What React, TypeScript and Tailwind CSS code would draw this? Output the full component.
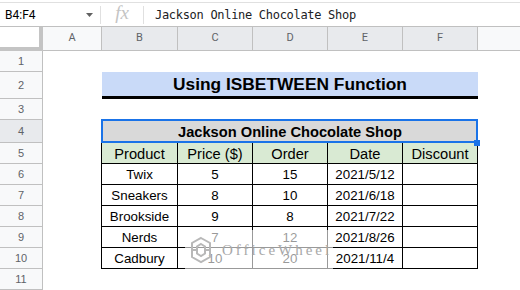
import React from "react";

const rows = [
  { product: "Twix", price: "5", order: "15", date: "2021/5/12" },
  { product: "Sneakers", price: "8", order: "10", date: "2021/6/18" },
  { product: "Brookside", price: "9", order: "8", date: "2021/7/22" },
  { product: "Nerds", price: "7", order: "12", date: "2021/8/26" },
  { product: "Cadbury", price: "10", order: "20", date: "2021/11/4" },
];

const headers = ["Product", "Price ($)", "Order", "Date", "Discount"];

function RowHead({ n, selected }: { n: number; selected?: boolean }) {
  return (
    <div
      className={`flex w-[43px] shrink-0 items-center justify-center border-r border-b border-[#c0c0c0] pt-[1px] text-[11px] text-[#5f6368] ${
        selected ? "bg-[#e8eaed]" : "bg-[#f8f9fa]"
      }`}
    >
      {n}
    </div>
  );
}

function TableRow({ cells, header }: { cells: string[]; header?: boolean }) {
  return (
    <>
      <div className="w-[59px] shrink-0 border-r border-black" />
      {cells.map((c, i) => (
        <div
          key={i}
          className={`flex shrink-0 items-center justify-center border-r border-b border-black pt-[2px] ${
            i === 0 ? "w-[76px]" : "w-[75px]"
          } ${header ? "bg-[#d9ead3] text-[14.67px]" : "text-[13.33px]"}`}
        >
          {c}
        </div>
      ))}
    </>
  );
}

export default function App() {
  return (
    <div className="relative h-[290px] w-[520px] overflow-hidden bg-white font-['Liberation_Sans',Arial,sans-serif] text-black">
      {/* formula bar */}
      <div className="h-[27px] bg-white pt-[2px]">
        <div className="flex h-[25px] items-center border-t border-b border-t-[#e0e0e0] border-b-[#c0c0c0]">
          <div className="flex w-[100px] shrink-0 items-center justify-between pl-[5px] pr-[7px]">
            <span className="text-[12px] font-['Roboto',sans-serif]">B4:F4</span>
            <svg width="7" height="4" viewBox="0 0 7 4" className="mt-[1px]">
              <path d="M0 0h7L3.5 4z" fill="#616161" />
            </svg>
          </div>
          <div className="h-[18px] w-px bg-[#e0e0e0]" />
          <div className="flex w-[42px] shrink-0 items-center justify-center pb-[2px] font-['Liberation_Serif',serif] text-[19px] italic text-[#c4c4c4]">
            fx
          </div>
          <div className="h-[18px] w-px bg-[#e0e0e0]" />
          <div className="pl-[11px] font-['DejaVu_Sans_Mono',monospace] text-[12px] tracking-[-0.3px] text-[#202124]">
            Jackson Online Chocolate Shop
          </div>
        </div>
      </div>

      {/* column headers */}
      <div className="flex h-[24px] font-['Roboto',sans-serif] text-[11px] text-[#5f6368]">
        <div className="w-[43px] shrink-0 border-r-4 border-b-4 border-[#c4c4c4] bg-white" />
        <div className="flex w-[59px] shrink-0 items-center justify-center border-r border-b border-[#c0c0c0] bg-[#f8f9fa]">A</div>
        <div className="flex w-[76px] shrink-0 items-center justify-center border-r border-b border-[#c0c0c0] bg-[#e8eaed]">B</div>
        <div className="flex w-[75px] shrink-0 items-center justify-center border-r border-b border-[#c0c0c0] bg-[#e8eaed]">C</div>
        <div className="flex w-[75px] shrink-0 items-center justify-center border-r border-b border-[#c0c0c0] bg-[#e8eaed]">D</div>
        <div className="flex w-[75px] shrink-0 items-center justify-center border-r border-b border-[#c0c0c0] bg-[#e8eaed]">E</div>
        <div className="flex w-[75px] shrink-0 items-center justify-center border-r border-b border-[#c0c0c0] bg-[#e8eaed]">F</div>
        <div className="flex-1 border-b border-[#c0c0c0] bg-[#f8f9fa]" />
      </div>

      {/* row 1 */}
      <div className="flex h-[21px]">
        <RowHead n={1} />
      </div>

      {/* row 2: title */}
      <div className="flex h-[27px]">
        <RowHead n={2} />
        <div className="w-[59px] shrink-0" />
        <div className="flex w-[376px] shrink-0 items-center justify-center border-b-[3px] border-black bg-[#c9daf8] pt-[2px] text-[17.33px] font-bold">
          Using ISBETWEEN Function
        </div>
      </div>

      {/* row 3 */}
      <div className="flex h-[21px]">
        <RowHead n={3} />
      </div>

      {/* row 4: selected merged cell */}
      <div className="flex h-[23px]">
        <RowHead n={4} selected />
        <div className="w-[59px] shrink-0" />
        <div className="relative flex w-[376px] shrink-0 items-center justify-center border-b border-black bg-[#d9d9d9] pt-[1px] text-[14.67px] font-bold">
          Jackson Online Chocolate Shop
          <div className="absolute -top-[1px] -left-[1px] right-0 -bottom-[1px] border-2 border-[#1a73e8]" />
          <div className="absolute -right-[2px] -bottom-[4px] h-[6px] w-[6px] bg-[#1a73e8]" />
        </div>
      </div>

      {/* row 5: headers */}
      <div className="flex h-[21px]">
        <RowHead n={5} />
        <TableRow cells={headers} header />
      </div>

      {rows.map((r, i) => (
        <div key={r.product} className="flex h-[21px]">
          <RowHead n={i + 6} />
          <TableRow cells={[r.product, r.price, r.order, r.date, ""]} />
        </div>
      ))}

      {/* row 11 */}
      <div className="flex h-[21px]">
        <RowHead n={11} />
      </div>

      {/* watermark */}
      <div className="absolute top-[230px] left-[185px] flex h-[40px] w-[148px] items-center gap-[10px] bg-white/60 pl-[5px]">
        <svg width="22" height="28" viewBox="0 0 22 28" fill="none" stroke="#b8b8b8" strokeWidth="2">
          <path d="M11 2 20 7v14l-9 5-9-5V7z" />
          <path d="M11 8 15 10.5v7L11 20l-4-2.5v-7z" />
          <path d="M2 14h5M15 14h5" />
        </svg>
        <span className="font-['Liberation_Serif',serif] text-[15px] tracking-[3px] text-[#a8a8a8]">OfficeWheel</span>
      </div>
    </div>
  );
}
